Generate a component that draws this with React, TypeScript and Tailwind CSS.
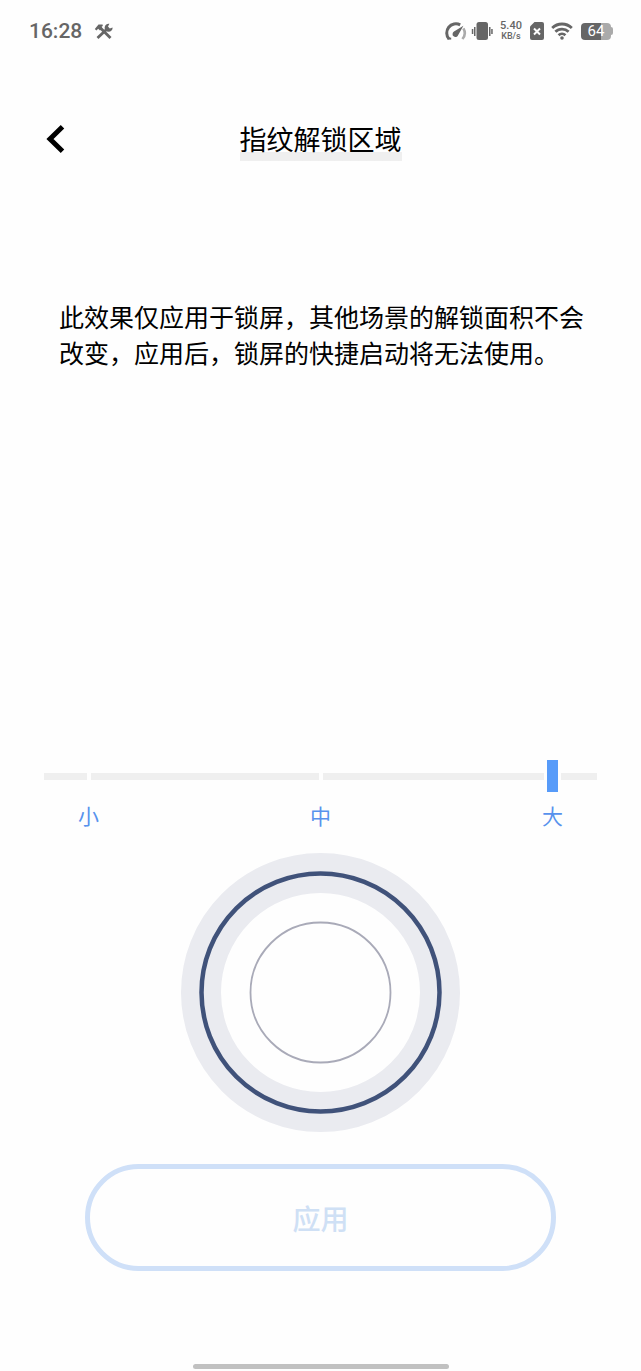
import React, { useState } from 'react';

const SIZES = ['小', '中', '大'];

const StatusBar: React.FC = () => (
  <div className="flex h-[62px] items-center justify-between pl-[29px] pr-7 font-['Roboto',sans-serif] text-[#666]">
    <div className="flex items-center gap-3">
      <span className="text-[21px] font-medium leading-6">16:28</span>
      <svg className="h-[18px] w-5" viewBox="0 0 20 18" fill="none" stroke="currentColor" aria-hidden="true">
        <path d="M3.5 16 L13 7" strokeWidth="2.8" />
        <path d="M6 5.5 L16.5 16" strokeWidth="2.8" />
        <path d="M0.8 7 L4.5 2.6 L8.6 2.4 L8.8 4 L7.6 4.8 L8.2 6.6 L6 8.6 L4.2 6.8 L2.4 8.4 Z" fill="currentColor" stroke="none" />
        <path d="M15.4 1.8 A4 4 0 1 0 18.6 5.4 L15.8 6.4 L14 4.6 Z" fill="currentColor" stroke="none" />
      </svg>
    </div>
    <div className="flex items-center">
      <svg className="h-5 w-[22px]" viewBox="0 0 22 20" fill="none" stroke="currentColor" aria-hidden="true">
        <path d="M4 18 A9.2 9.2 0 0 1 15.2 3.8" strokeWidth="3" />
        <path d="M18.4 7.4 A9.2 9.2 0 0 1 17.4 18" strokeWidth="2.6" opacity="0.55" />
        <path d="M2.8 17.6 H6.2" strokeWidth="2" />
        <path d="M18.4 4.8 L13.2 14 A2.9 2.9 0 1 1 9 10.6 Z" fill="currentColor" stroke="none" />
      </svg>
      <svg className="ml-1 h-5 w-[23px]" viewBox="0 0 23 20" fill="currentColor" aria-hidden="true">
        <rect x="5.5" y="1" width="11.5" height="18" rx="2.5" />
        <path d="M0.8 8h1.5v5H0.8zM3 6h1.5v9H3zM18 6h1.5v9H18zM20.2 8h1.5v5h-1.5z" />
      </svg>
      <div className="ml-[3px] flex w-7 flex-col items-center font-medium">
        <span className="text-[11px] leading-[10px]">5.40</span>
        <span className="text-[9px] leading-[10px]">KB/s</span>
      </div>
      <svg className="ml-1 h-5 w-4" viewBox="0 0 16 20" aria-hidden="true">
        <path d="M5.5 1 H13 A2 2 0 0 1 15 3 V17 A2 2 0 0 1 13 19 H3 A2 2 0 0 1 1 17 V5.5 Z" fill="currentColor" />
        <path d="M5 7.5 L11 13.5 M11 7.5 L5 13.5" stroke="#fff" strokeWidth="2" />
      </svg>
      <svg className="ml-[6px] h-5 w-[22px]" viewBox="0 0 22 20" fill="none" stroke="currentColor" strokeWidth="2.8" aria-hidden="true">
        <path d="M1.2 7 A14 14 0 0 1 20.8 7" />
        <path d="M4.4 10.8 A9.4 9.4 0 0 1 17.6 10.8" />
        <path d="M7.6 14.2 A4.9 4.9 0 0 1 14.4 14.2" />
        <circle cx="11" cy="17" r="1.8" fill="currentColor" stroke="none" />
      </svg>
      <div className="ml-2 flex items-center">
        <div className="flex h-[17px] w-[30px] items-center justify-center rounded bg-linear-to-r from-[#666] from-66% to-[#aaa] to-66%">
          <span className="text-[15px] leading-4 text-white">64</span>
        </div>
        <div className="h-2 w-[2px] rounded-r-sm bg-[#aaa]" />
      </div>
    </div>
  </div>
);

const Header: React.FC = () => (
  <header className="grid grid-cols-[1fr_auto_1fr] items-center px-10 pt-[55px]">
    <button type="button" aria-label="返回" className="h-11 w-8">
      <svg className="mx-auto h-[30px] w-5" viewBox="0 0 20 30" fill="none" stroke="#000" strokeWidth="5" aria-hidden="true">
        <path d="M16.5 2.8 L4 15 L16.5 27.2" />
      </svg>
    </button>
    <h1 className="bg-linear-to-b from-transparent from-80% to-[#efefef] to-80% text-[27px] leading-[44px]">
      指纹解锁区域
    </h1>
  </header>
);

const SizeSlider: React.FC<{ value: number; onChange: (value: number) => void }> = ({ value, onChange }) => (
  <div className="px-11">
    <div className="grid items-center">
      <div className="col-start-1 row-start-1 flex h-[7px] gap-1">
        <div className="w-[43px] bg-[#efefef]" />
        <div className="flex-1 bg-[#efefef]" />
        <div className="flex-1 bg-[#efefef]" />
        <div className="w-[43px] bg-[#efefef]" />
      </div>
      <input
        type="range"
        min={0}
        max={2}
        step={1}
        value={value}
        onChange={(e) => onChange(Number(e.target.value))}
        aria-label="指纹解锁区域"
        className="z-10 col-start-1 row-start-1 mx-9 h-8 cursor-pointer appearance-none bg-transparent [&::-webkit-slider-thumb]:h-8 [&::-webkit-slider-thumb]:w-[17px] [&::-webkit-slider-thumb]:appearance-none [&::-webkit-slider-thumb]:rounded-none [&::-webkit-slider-thumb]:border-x-[3px] [&::-webkit-slider-thumb]:border-y-0 [&::-webkit-slider-thumb]:border-solid [&::-webkit-slider-thumb]:border-[#fefefe] [&::-webkit-slider-thumb]:bg-[#579bf9]"
      />
    </div>
    <div className="mt-2 flex justify-between px-[34px] text-[21px] leading-[30px] text-[#5792ed]">
      {SIZES.map((size) => (
        <span key={size}>{size}</span>
      ))}
    </div>
  </div>
);

const FingerprintArea: React.FC = () => (
  <svg className="mx-auto mt-[22px] h-[280px] w-[280px]" viewBox="0 0 280 280" fill="none" aria-hidden="true">
    <circle cx="139.5" cy="140.5" r="119.5" stroke="#eaebf0" strokeWidth="40" />
    <circle cx="139.5" cy="140.5" r="119" stroke="#40527a" strokeWidth="4.5" />
    <circle cx="139.5" cy="140.5" r="70" stroke="#a9aab8" strokeWidth="1.8" />
  </svg>
);

function App() {
  const [size, setSize] = useState(2);

  return (
    <div
      lang="zh-CN"
      className="flex min-h-screen flex-col bg-[#fefefe] font-['Noto_Sans_CJK_SC',sans-serif] text-black"
    >
      <StatusBar />
      <Header />
      <main className="flex flex-1 flex-col">
        <p className="mt-[137px] pl-[59px] pr-14 text-[25px] leading-9">
          此效果仅应用于锁屏，其他场景的解锁面积不会改变，应用后，锁屏的快捷启动将无法使用。
        </p>
        <div className="mt-auto pt-10">
          <SizeSlider value={size} onChange={setSize} />
          <FingerprintArea />
        </div>
        <div className="px-[85px] pt-8">
          <button
            type="button"
            className="h-[107px] w-full rounded-full border-[5px] border-[#cfe0f8] text-[28px] font-medium text-[#cfe0f5]"
          >
            应用
          </button>
        </div>
      </main>
      <div className="mx-auto mb-[2px] mt-[93px] h-[5px] w-64 rounded-full bg-[#c1c1c1]" />
    </div>
  );
}

export default App;
